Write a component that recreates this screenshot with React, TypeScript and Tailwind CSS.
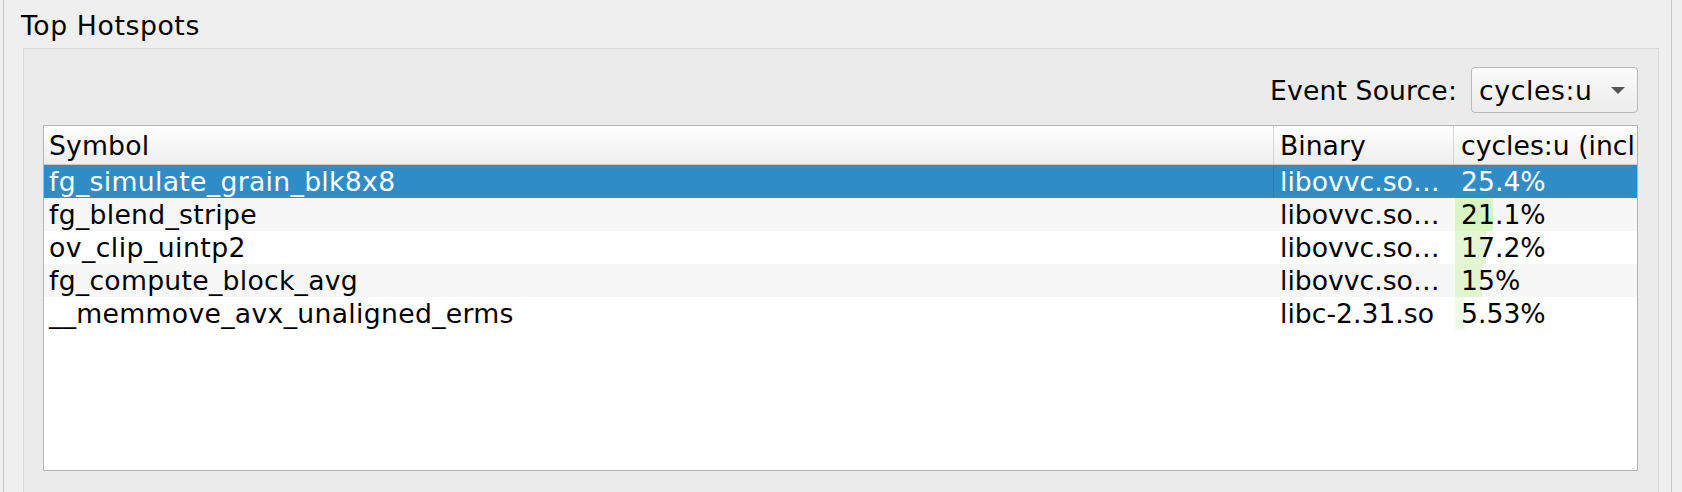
import React from "react";

type Row = { symbol: string; binary: string; cost: string; pct: number; bar: string; track: string };

const rows: Row[] = [
  { symbol: "fg_simulate_grain_blk8x8", binary: "libovvc.so…", cost: "25.4%", pct: 25.4, bar: "#d6f3c1", track: "tracking-[0.31px]" },
  { symbol: "fg_blend_stripe", binary: "libovvc.so…", cost: "21.1%", pct: 21.1, bar: "#d8f5c4", track: "tracking-[0.29px]" },
  { symbol: "ov_clip_uintp2", binary: "libovvc.so…", cost: "17.2%", pct: 17.2, bar: "#e2f8d4", track: "tracking-[0.45px]" },
  { symbol: "fg_compute_block_avg", binary: "libovvc.so…", cost: "15%", pct: 15, bar: "#e0f6d0", track: "tracking-[0.27px]" },
  { symbol: "__memmove_avx_unaligned_erms", binary: "libc-2.31.so", cost: "5.53%", pct: 5.53, bar: "#eefbe6", track: "tracking-[0.31px]" },
];

export default function App() {
  return (
    <div className="w-[1682px] h-[492px] overflow-hidden bg-[#efefef] font-['DejaVu_Sans',sans-serif] text-[26.67px] text-black">
      <div className="ml-[3px] w-[1669px] h-full border-x border-[#c6c6c6] pl-[17px] pt-[10px]">
        <div className="leading-[31px] h-[31px] whitespace-nowrap tracking-[0.6px]">Top Hotspots</div>
        <div className="mt-[7px] ml-[2px] w-[1636px] h-[460px] border border-[#d9d9d9] bg-[#ebebeb] pl-[19px] pt-[18px]">
          {/* Event source row */}
          <div className="w-[1595px] h-[46px] flex justify-end items-center gap-[14px]">
            <span className="leading-[31px] whitespace-nowrap tracking-[0.12px]">Event Source:</span>
            <div className="w-[167px] h-[46px] rounded-[4px] border border-[#b9b9b9] bg-gradient-to-b from-[#fbfbfb] to-[#ececec] flex items-center pl-[7px] pr-[12px] justify-between">
              <span className="leading-[31px] whitespace-nowrap tracking-[0.6px]">cycles:u</span>
              <svg width="14" height="7" viewBox="0 0 14 7" className="block">
                <polygon points="0,0 14,0 7,7" fill="#555555" />
              </svg>
            </div>
          </div>
          {/* Table */}
          <div className="mt-[12px] w-[1595px] h-[346px] border border-[#b5b5b5] bg-white overflow-hidden">
            <div className="flex h-[39px] border-b border-[#c9c9c9] bg-gradient-to-b from-[#ffffff] to-[#eeeeee]">
              <div className="w-[1230px] shrink-0 border-r border-[#d6d6d6] pl-[5px] flex items-center leading-[31px] whitespace-nowrap tracking-[0.15px]">Symbol</div>
              <div className="w-[180px] shrink-0 border-r border-[#d6d6d6] pl-[6px] flex items-center leading-[31px] whitespace-nowrap">Binary</div>
              <div className="flex-1 min-w-0 pl-[7px] flex items-center leading-[31px] whitespace-nowrap overflow-hidden">cycles:u (inclusive)</div>
            </div>
            {rows.map((r, i) => {
              const selected = i === 0;
              const bg = selected ? "bg-[#308cc6] text-white" : i % 2 === 1 ? "bg-[#f7f7f7]" : "bg-white";
              return (
                <div key={i} className={`flex h-[33px] ${bg}`}>
                  <div
                    className={`w-[1230px] shrink-0 pl-[5px] flex items-center leading-[31px] whitespace-nowrap ${r.track} ${
                      selected ? "border-r border-[#2a7fb6]" : ""
                    }`}
                  >
                    {r.symbol}
                  </div>
                  <div className="w-[180px] shrink-0 pl-[6px] flex items-center leading-[31px] whitespace-nowrap">
                    {r.binary}
                  </div>
                  <div className="relative flex-1 min-w-0 pl-[7px] flex items-center leading-[31px] whitespace-nowrap">
                    {!selected && (
                      <div
                        className="absolute left-[1px] top-0 bottom-0"
                        style={{ width: `${Math.round(r.pct * 1.8)}px`, backgroundColor: r.bar }}
                      />
                    )}
                    <span className="relative">{r.cost}</span>
                  </div>
                </div>
              );
            })}
          </div>
        </div>
      </div>
    </div>
  );
}
